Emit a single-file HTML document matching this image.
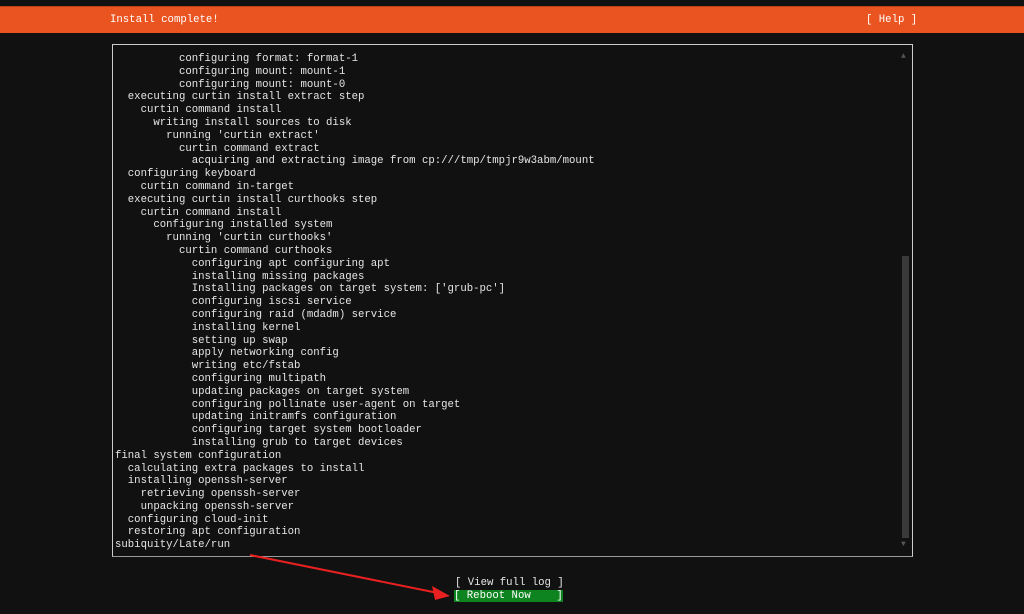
<!DOCTYPE html>
<html><head><style>
body{margin:0;width:1024px;height:614px;background:#111;overflow:hidden;position:relative;font-family:"Liberation Mono","DejaVu Sans Mono",monospace;font-size:10.67px;color:#e6e6e6}
.hdr{position:absolute;left:0;top:6px;width:1024px;height:26px;background:#e95420;border-top:1px solid #b8421a}
.hdr span{position:absolute;top:7px;line-height:13px;color:#fff}
.box{position:absolute;left:112px;top:44px;width:799px;height:511px;border:1px solid #ccc;border-bottom-color:#999}
pre{position:absolute;left:115px;top:53px;margin:0;font:inherit;line-height:12.8px;white-space:pre}
.sb{position:absolute;left:902px;top:256px;width:7px;height:282px;background:#3a3a3a}
.ar{position:absolute;left:901px;font-size:8px;color:#555}
.btn{position:absolute;left:455px;line-height:12px;white-space:pre}
</style></head><body>
<div class="hdr"><span style="left:110px">Install complete!</span><span style="left:866px">[ Help ]</span></div>
<div class="box"></div>
<div class="sb"></div>
<div class="ar" style="top:52px">▲</div>
<div class="ar" style="top:540px">▼</div>
<pre>          configuring format: format-1
          configuring mount: mount-1
          configuring mount: mount-0
  executing curtin install extract step
    curtin command install
      writing install sources to disk
        running 'curtin extract'
          curtin command extract
            acquiring and extracting image from cp:///tmp/tmpjr9w3abm/mount
  configuring keyboard
    curtin command in-target
  executing curtin install curthooks step
    curtin command install
      configuring installed system
        running 'curtin curthooks'
          curtin command curthooks
            configuring apt configuring apt
            installing missing packages
            Installing packages on target system: ['grub-pc']
            configuring iscsi service
            configuring raid (mdadm) service
            installing kernel
            setting up swap
            apply networking config
            writing etc/fstab
            configuring multipath
            updating packages on target system
            configuring pollinate user-agent on target
            updating initramfs configuration
            configuring target system bootloader
            installing grub to target devices
final system configuration
  calculating extra packages to install
  installing openssh-server
    retrieving openssh-server
    unpacking openssh-server
  configuring cloud-init
  restoring apt configuration
subiquity/Late/run</pre>
<div class="btn" style="top:577px">[ View full log ]</div>
<div class="btn" style="top:590px;left:454px;width:109px;height:12px;background:#0e8420;color:#fff">[ Reboot Now    ]</div>
<svg style="position:absolute;left:0;top:0" width="1024" height="614"><line x1="250" y1="555" x2="438" y2="593" stroke="#e82020" stroke-width="2"/><polygon points="450,596 432,586 435,600" fill="#e82020"/></svg>
</body></html>
